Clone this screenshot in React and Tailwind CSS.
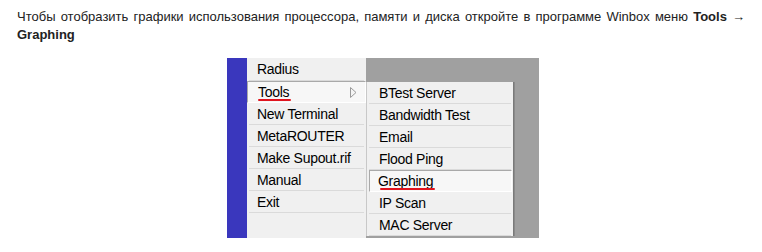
const leftItems = [
  { label: "Radius" },
  { label: "Tools", active: true, mark: true, arrow: true },
  { label: "New Terminal" },
  { label: "MetaROUTER" },
  { label: "Make Supout.rif" },
  { label: "Manual" },
  { label: "Exit" },
];

const rightItems = [
  { label: "BTest Server" },
  { label: "Bandwidth Test" },
  { label: "Email" },
  { label: "Flood Ping" },
  { label: "Graphing", active: true, mark: true, inset: true },
  { label: "IP Scan" },
  { label: "MAC Server" },
];

function MenuRow({ item, pad }) {
  return (
    <div
      className={
        "relative h-[22px] flex items-center " +
        (item.active
          ? "bg-[#f7f7f7] border-t border-l border-[#a9a9a9] border-b border-b-white border-r border-r-white " +
            (item.inset ? "ml-[2px] mr-[1px]" : "")
          : "border-b border-[#dadada] mx-[2px]")
      }
    >
      <span className={"relative leading-[16px] " + (item.active ? pad[0] : pad[1])}>
        {item.label}
        {item.mark && (
          <span className="absolute left-[10px] right-[-2px] bottom-[-1px] h-[2px] bg-[#e0141e] rounded-full" />
        )}
      </span>
      {item.arrow && (
        <svg
          className="absolute right-[8px] top-[5px]"
          width="7"
          height="11"
          viewBox="0 0 7 11"
        >
          <path d="M0.5 0.5 L6 5.5 L0.5 10.5 Z" fill="#f4f4f4" stroke="#9a9a9a" strokeWidth="1" />
        </svg>
      )}
    </div>
  );
}

export default function App() {
  return (
    <div className="w-[762px] h-[252px] bg-white overflow-hidden">
      <p
        className="px-[17px] pt-[8px] text-[13px] leading-[18px] text-[#222] text-justify"
        style={{ fontFamily: '"Liberation Sans", Arial, sans-serif' }}
      >
        Чтобы отобразить графики использования процессора, памяти и диска
        откройте в программе Winbox меню <b>Tools →</b> <b>Graphing</b>
      </p>

      <div
        className="ml-[227px] mt-[14px] w-[312px] h-[180px] flex text-[14px] tracking-[-0.3px] text-black"
        style={{ fontFamily: '"Liberation Sans", Arial, sans-serif' }}
      >
        {/* blue sidebar */}
        <div className="w-[20px] bg-[#3a37bd]" />

        {/* main menu */}
        <div className="w-[119px] bg-[#f0f0f0]">
          <div className="h-[23px] flex items-center border-b border-[#dadada] mx-[2px]">
            <span className="pl-[8px]">Radius</span>
          </div>
          {leftItems.slice(1).map((item) => (
            <MenuRow key={item.label} item={item} pad={["pl-[10px]", "pl-[8px]"]} />
          ))}
        </div>

        {/* desktop area with submenu */}
        <div className="flex-1 bg-[#a0a0a0] pt-[24px]">
          <div className="w-[148px] bg-[#f0f0f0] border-l border-[#c8c8c8] border-r border-r-[#7a7a7a] shadow-[1px_0_0_#8a8a8a]">
            {rightItems.map((item) => (
              <MenuRow key={item.label} item={item} pad={["pl-[8px]", "pl-[10px]"]} />
            ))}
          </div>
        </div>
      </div>
    </div>
  );
}
